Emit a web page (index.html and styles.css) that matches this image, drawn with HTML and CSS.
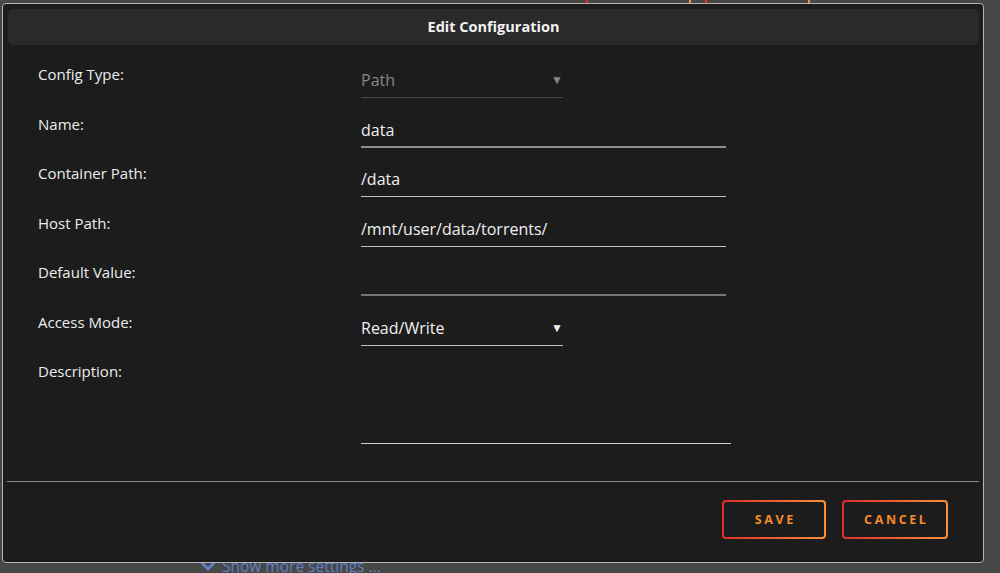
FILE: index.html
```html
<!DOCTYPE html>
<html lang="en">
<head>
    <meta charset="UTF-8">
    <title>Edit Configuration</title>
    <link rel="stylesheet" href="styles.css">
</head>
<body>
    <!-- buttons of the page under the dialog, only their edges show -->
    <div class="behind">
        <span class="behind-btn btn-a"></span>
        <span class="behind-btn btn-b"></span>
    </div>

    <div class="dialog">
        <div class="dialog-title">Edit Configuration</div>

        <div class="form-grid">
            <div class="label">Config Type:</div>
            <div class="field">
                <div class="select disabled">Path<span class="arrow">&#9660;</span></div>
            </div>

            <div class="label">Name:</div>
            <div class="field"><div class="input thick">data</div></div>

            <div class="label">Container Path:</div>
            <div class="field"><div class="input">/data</div></div>

            <div class="label">Host Path:</div>
            <div class="field"><div class="input">/mnt/user/data/torrents/</div></div>

            <div class="label">Default Value:</div>
            <div class="field"><div class="input thick dim">&nbsp;</div></div>

            <div class="label">Access Mode:</div>
            <div class="field">
                <div class="select">Read/Write<span class="arrow">&#9660;</span></div>
            </div>

            <div class="label">Description:</div>
            <div class="field"><div class="textarea"></div></div>
        </div>

        <div class="dialog-footer">
            <button class="btn btn-save">SAVE</button>
            <button class="btn btn-cancel">CANCEL</button>
        </div>
    </div>

    <div class="show-more">
        <svg class="chevron" width="16" height="10" viewBox="0 0 16 10">
            <path d="M1 1 L8 8 L15 1" fill="none" stroke="#5f80c4" stroke-width="3"/>
        </svg>
        Show more settings ...
    </div>
</body>
</html>
```

FILE: styles.css
```css
body {
    margin: 0;
    padding: 0;
    background-color: #474747;
    font-family: 'Open Sans', 'Noto Sans', sans-serif;
    color: #e6e6e6;
    overflow: hidden;
}
.behind {
    position: absolute;
    top: -40px;
    left: 0;
    width: 1000px;
    height: 50px;
}
.behind-btn {
    position: absolute;
    top: 0;
    height: 48px;
    border: 2px solid transparent;
    border-radius: 4px;
    background: linear-gradient(#474747, #474747) padding-box,
                linear-gradient(90deg, #e22d2d, #f7913a) border-box;
}
.btn-a { left: 586px; width: 101px; }
.btn-b { left: 705px; width: 101px; }
.dialog {
    position: relative;
    z-index: 2;
    margin: 3px 0 0 2px;
    width: 980px;
    height: 558px;
    background-color: #1c1c1c;
    border: 1px solid #b4b4b4;
    border-radius: 4px;
    display: flex;
    flex-direction: column;
}
.dialog-title {
    margin: 5px 4px 0 5px;
    height: 36px;
    line-height: 36px;
    background-color: #2a2a2a;
    border-radius: 5px;
    text-align: center;
    font-size: 14.5px;
    font-weight: bold;
    color: #f2f2f2;
}
.form-grid {
    display: grid;
    grid-template-columns: 323px 1fr;
    grid-auto-rows: 49.5px;
    margin-top: 20px;
    padding-left: 35px;
}
.label {
    font-size: 15px;
    line-height: 18px;
    color: #ececec;
}
.field {
    padding-top: 6px;
}
.input, .select {
    font-size: 16px;
    line-height: 18px;
    padding-bottom: 8px;
    color: #f0f0f0;
    border-bottom: 1px solid #c2c2c2;
    width: 365px;
}
.input.thick {
    border-bottom: 2px solid #8e8e8e;
    padding-bottom: 7px;
}
.input.dim {
    border-bottom-color: #767676;
}
.select {
    width: 202px;
    display: flex;
    justify-content: space-between;
}
.select.disabled {
    color: #878787;
    border-bottom-color: #474747;
}
.arrow {
    font-size: 12px;
    padding-right: 0;
}
.textarea {
    width: 370px;
    height: 75px;
    border-bottom: 1px solid #cfcfcf;
}
.dialog-footer {
    margin-top: auto;
    margin-left: 4px;
    margin-right: 4px;
    border-top: 1px solid #8a8a8a;
    height: 81px;
    display: flex;
    justify-content: flex-end;
    align-items: flex-start;
    gap: 16px;
    padding: 18px 31px 0 0;
    box-sizing: border-box;
}
.btn {
    height: 39px;
    padding: 0;
    font-family: 'Open Sans', 'Noto Sans', sans-serif;
    font-size: 12.5px;
    font-weight: bold;
    letter-spacing: 2.6px;
    text-indent: 2.6px;
    color: #f58a2c;
    border: 2px solid transparent;
    border-radius: 4px;
    background: linear-gradient(#1c1c1c, #1c1c1c) padding-box,
                linear-gradient(90deg, #e22d2d, #f7913a) border-box;
    cursor: pointer;
}
.btn-save { width: 104px; }
.btn-cancel { width: 106px; }
.show-more {
    position: relative;
    z-index: 1;
    margin: -7px 0 0 200px;
    font-size: 15.5px;
    line-height: 20px;
    color: #5f80c4;
    display: flex;
    align-items: center;
    gap: 6px;
}
```
